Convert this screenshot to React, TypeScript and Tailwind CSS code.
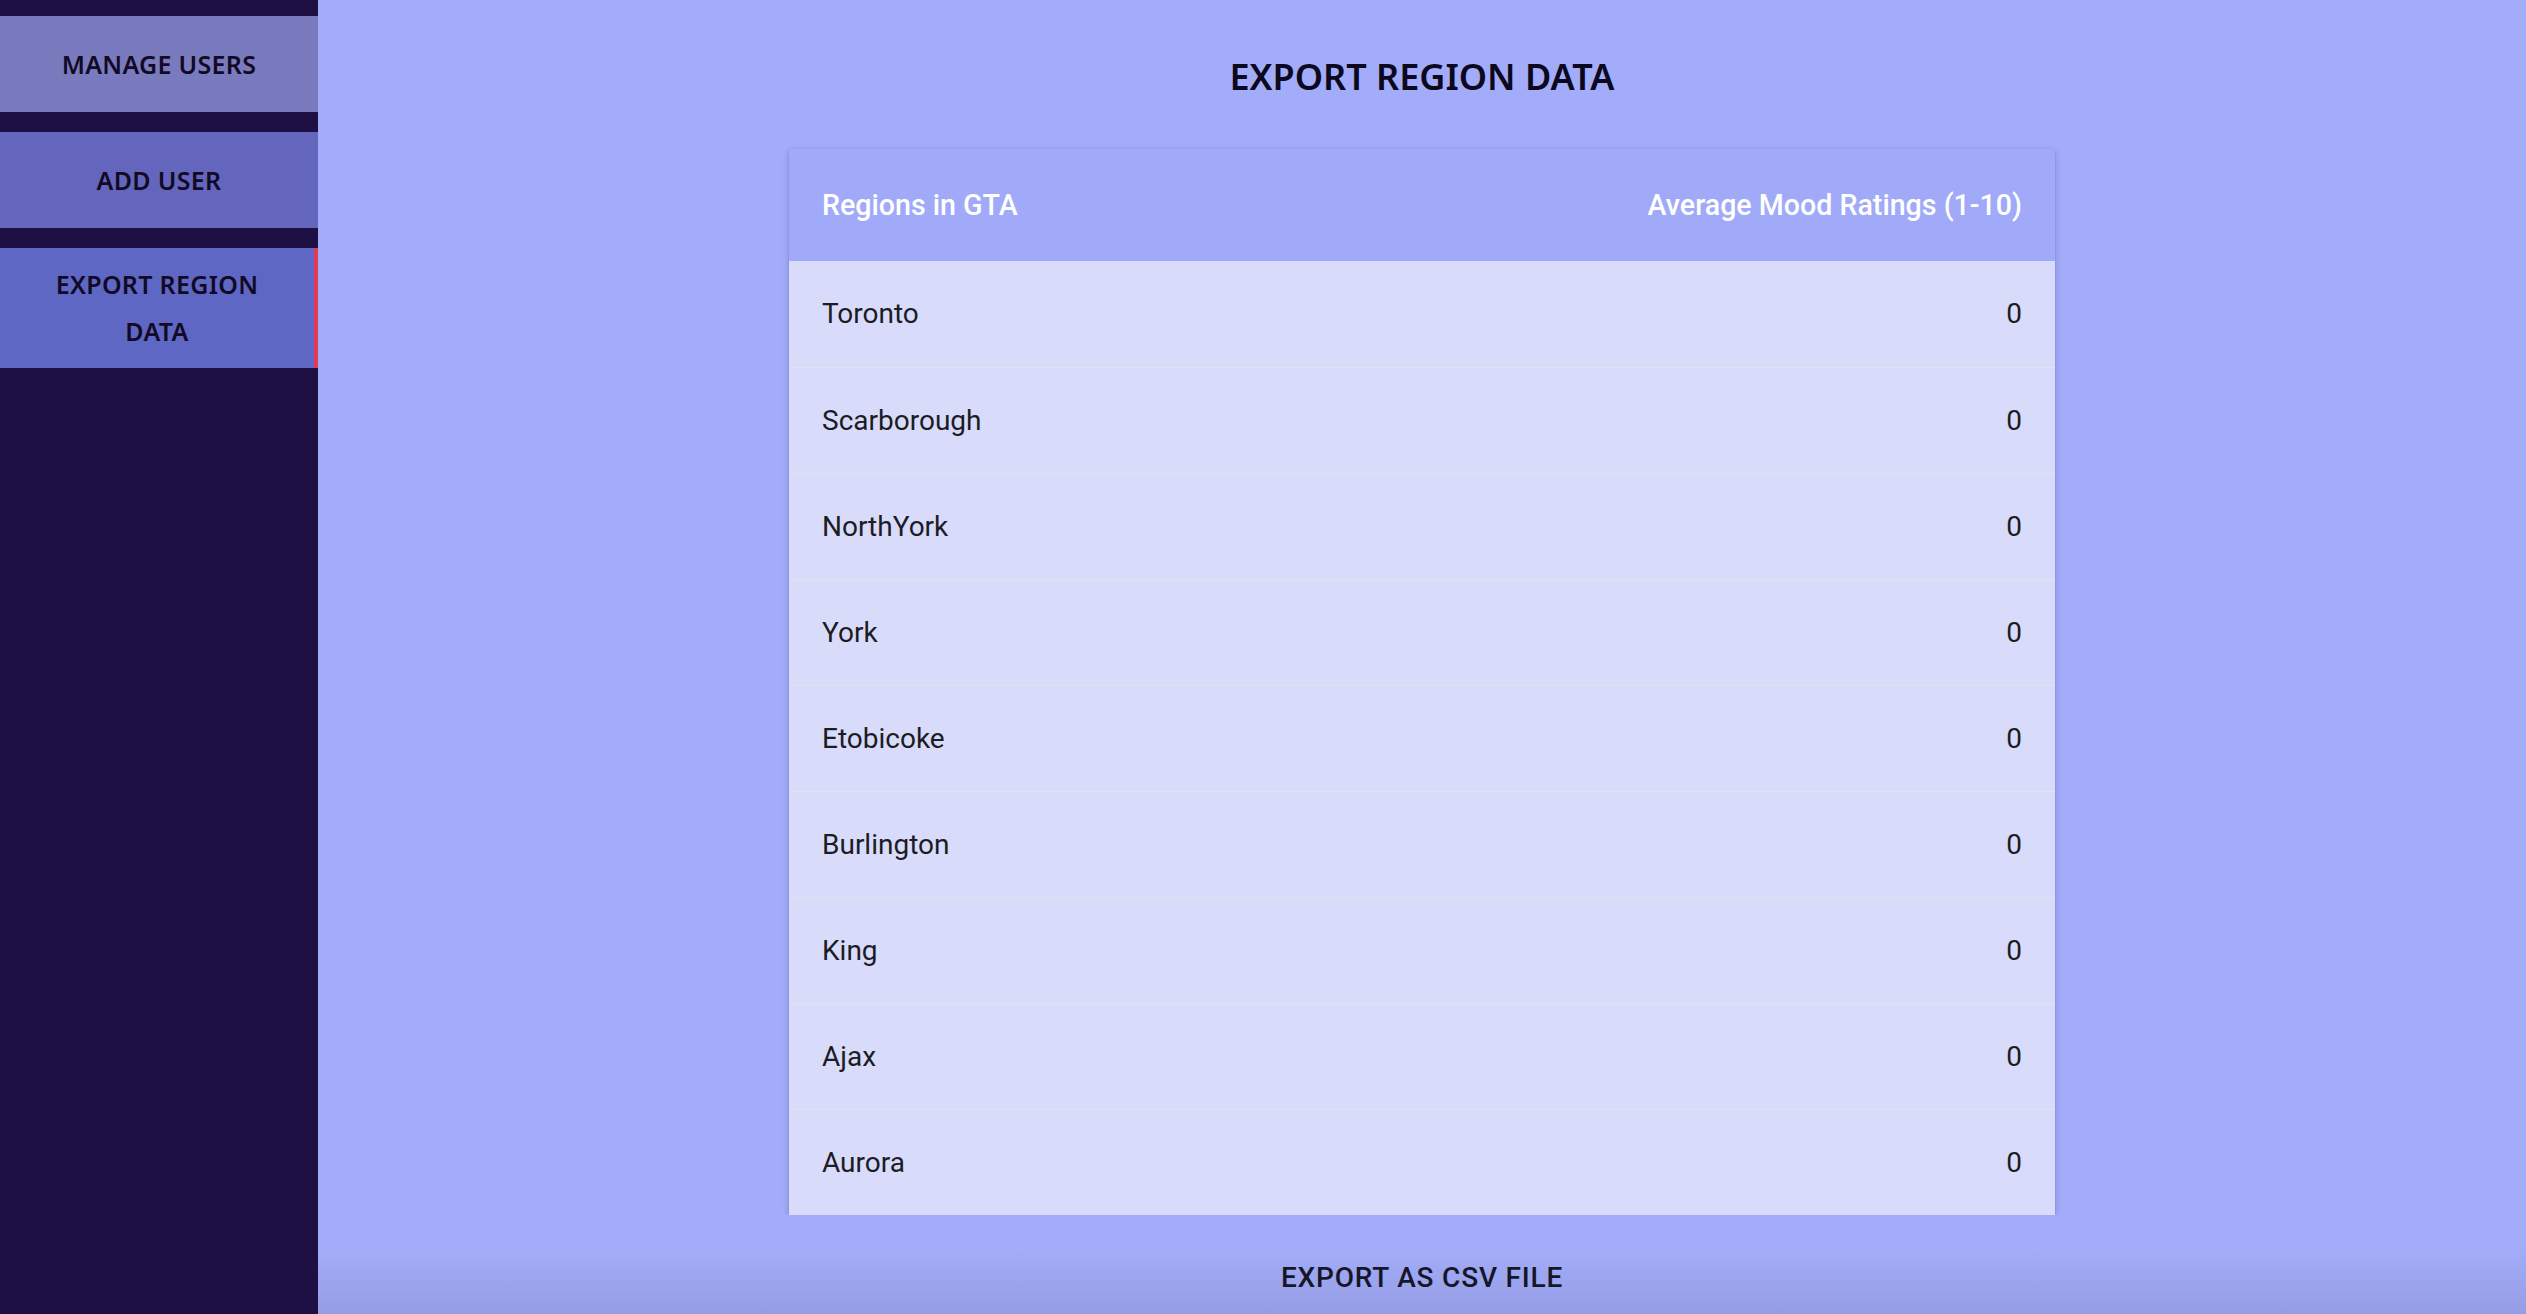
const regions = [
  'Toronto',
  'Scarborough',
  'NorthYork',
  'York',
  'Etobicoke',
  'Burlington',
  'King',
  'Ajax',
  'Aurora',
];

const navItems = [
  { label: 'MANAGE USERS', bg: 'bg-[#7a7bbf]', h: 'h-[96px]', active: false },
  { label: 'ADD USER', bg: 'bg-[#6466bd]', h: 'h-[96px]', active: false },
  { label: 'EXPORT REGION DATA', bg: 'bg-[#5f67c4]', h: 'h-[120px]', active: true },
];

export default function App() {
  return (
    <div className="flex h-screen w-full overflow-hidden">
      <aside className="flex w-[318px] shrink-0 flex-col gap-[20px] bg-[#1e1045] pt-[16px]">
        {navItems.map((item) => (
          <div
            key={item.label}
            className={`flex items-center justify-center px-[50px] text-center ${item.bg} ${item.h} ${
              item.active ? 'border-r-[4px] border-[#e0395a]' : ''
            }`}
          >
            <span className="font-['Noto_Sans',sans-serif] text-[25px] font-semibold leading-[47px] tracking-[0.3px] text-[#120a25]">
              {item.label}
            </span>
          </div>
        ))}
      </aside>

      <main className="flex flex-1 flex-col items-center bg-[#a2acf8]">
        <h1 className="mt-[50px] font-['Noto_Sans',sans-serif] text-[36px] font-semibold leading-[54px] text-[#0b0820]">
          EXPORT REGION DATA
        </h1>

        <div className="mt-[45px] w-[1266px] overflow-hidden rounded-t-[4px] shadow-[0_2px_6px_rgba(40,50,140,0.25),0_1px_2px_rgba(40,50,140,0.2)] font-['Roboto',sans-serif]">
          <div className="flex h-[112px] items-center justify-between bg-[#a1aaf8] px-[33px] text-[28.6px] font-medium text-white">
            <span>Regions in GTA</span>
            <span>Average Mood Ratings (1-10)</span>
          </div>
          {regions.map((r, i) => (
            <div
              key={r}
              className={`flex h-[106px] items-center justify-between bg-[#d9dbfb] px-[33px] text-[28px] text-[#1c1c24] ${
                i > 0 ? 'border-t border-[#e2e2ea]' : ''
              }`}
            >
              <span>{r}</span>
              <span>0</span>
            </div>
          ))}
        </div>

        <div className="flex w-full flex-1 items-start justify-center bg-gradient-to-b from-[#a2acf8] from-35% to-[#959de4] pt-[42px]">
          <button className="font-['Roboto',sans-serif] text-[28px] font-medium tracking-[0.8px] text-[#171629]">
            EXPORT AS CSV FILE
          </button>
        </div>
      </main>
    </div>
  );
}
